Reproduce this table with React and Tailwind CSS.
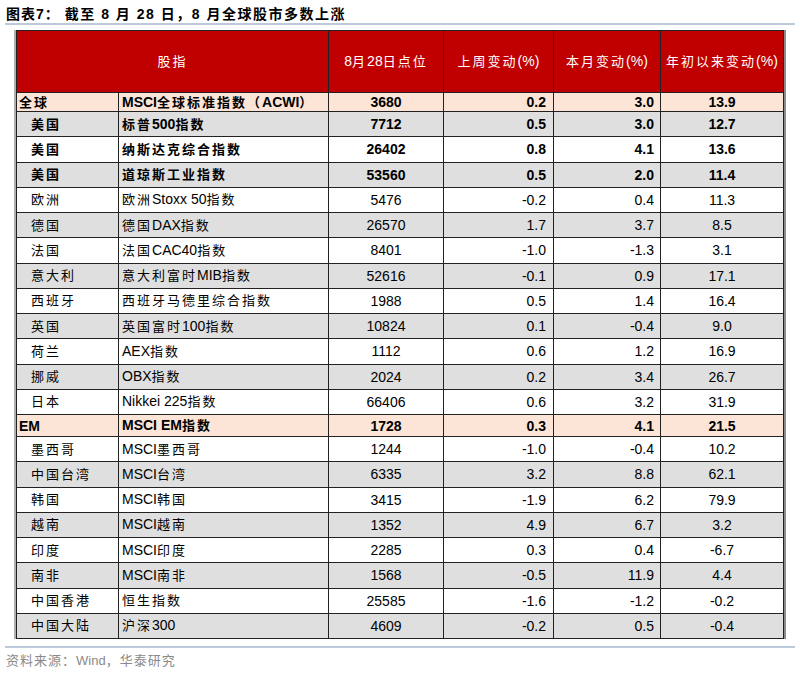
import React from "react";

const rows = [
  ["全球", "MSCI全球标准指数（ACWI）", "3680", "0.2", "3.0", "13.9", "main"],
  ["美国", "标普500指数", "7712", "0.5", "3.0", "12.7", "bold"],
  ["美国", "纳斯达克综合指数", "26402", "0.8", "4.1", "13.6", "bold"],
  ["美国", "道琼斯工业指数", "53560", "0.5", "2.0", "11.4", "bold"],
  ["欧洲", "欧洲Stoxx 50指数", "5476", "-0.2", "0.4", "11.3"],
  ["德国", "德国DAX指数", "26570", "1.7", "3.7", "8.5"],
  ["法国", "法国CAC40指数", "8401", "-1.0", "-1.3", "3.1"],
  ["意大利", "意大利富时MIB指数", "52616", "-0.1", "0.9", "17.1"],
  ["西班牙", "西班牙马德里综合指数", "1988", "0.5", "1.4", "16.4"],
  ["英国", "英国富时100指数", "10824", "0.1", "-0.4", "9.0"],
  ["荷兰", "AEX指数", "1112", "0.6", "1.2", "16.9"],
  ["挪威", "OBX指数", "2024", "0.2", "3.4", "26.7"],
  ["日本", "Nikkei 225指数", "66406", "0.6", "3.2", "31.9"],
  ["EM", "MSCI EM指数", "1728", "0.3", "4.1", "21.5", "main"],
  ["墨西哥", "MSCI墨西哥", "1244", "-1.0", "-0.4", "10.2"],
  ["中国台湾", "MSCI台湾", "6335", "3.2", "8.8", "62.1"],
  ["韩国", "MSCI韩国", "3415", "-1.9", "6.2", "79.9"],
  ["越南", "MSCI越南", "1352", "4.9", "6.7", "3.2"],
  ["印度", "MSCI印度", "2285", "0.3", "0.4", "-6.7"],
  ["南非", "MSCI南非", "1568", "-0.5", "11.9", "4.4"],
  ["中国香港", "恒生指数", "25585", "-1.6", "-1.2", "-0.2"],
  ["中国大陆", "沪深300", "4609", "-0.2", "0.5", "-0.4"],
];

const CJK = /([\u3000-\u303f\u4e00-\u9fff\uff00-\uffef]+)/;

// cjk runs get wider spacing like the pdf font
const Txt = ({ s }) =>
  s.split(CJK).map((part, i) =>
    CJK.test(part) ? (
      <span key={i} className="tracking-[2px] text-[13px]">{part}</span>
    ) : (
      <span key={i}>{part}</span>
    )
  );

export default function App() {
  return (
    <div className="w-[800px] h-[673px] bg-white text-black font-['Liberation_Sans','Noto_Sans_CJK_SC',sans-serif] overflow-hidden">
      <div className="h-[23px] pl-[6px] pt-[5px] text-[14px] font-bold leading-[18px]">
        <span className="tracking-[1px]">图表7：</span>
        <span className="ml-[5px] tracking-[1.5px]">截至 8 月 28 日，8 月全球股市多数上涨</span>
      </div>
      <div className="mx-[5px] h-[2px] bg-[#bccadb]" />

      <table className="ml-[16px] mt-[5px] table-fixed border-collapse text-[14px] shadow-[2px_0_0_#8c8c8c,-2px_0_0_#b0b0b0]">
        <colgroup>
          <col className="w-[102px]" />
          <col className="w-[210px]" />
          <col className="w-[115px]" />
          <col className="w-[110px]" />
          <col className="w-[107px]" />
          <col className="w-[123px]" />
        </colgroup>
        <thead>
          <tr className="h-[62px] bg-[#c00000] text-white">
            <th colSpan={2} className="border border-[#222] font-normal"><Txt s="股指" /></th>
            <th className="border border-[#222] font-normal"><Txt s="8月28日点位" /></th>
            <th className="border border-[#222] font-normal"><Txt s="上周变动(%)" /></th>
            <th className="border border-[#222] font-normal"><Txt s="本月变动(%)" /></th>
            <th className="border border-[#222] font-normal whitespace-nowrap"><Txt s="年初以来变动(%)" /></th>
          </tr>
        </thead>
        <tbody>
          {rows.map((r, i) => {
            const main = r[6] === "main";
            const bold = main || r[6] === "bold";
            let bg = i % 2 === 1 ? "bg-[#dfdfdf]" : "bg-white";
            if (main) bg = "bg-[#fce4d6]";
            let h = "h-[25.25px]";
            if (i === 0) h = "h-[19px]";
            if (i === 13) h = "h-[22px]";
            return (
              <tr key={i} className={`${h} ${bg} ${bold ? "font-bold" : ""} leading-[16px]`}>
                <td className={`border border-[#222] ${main ? "pl-[2px]" : "pl-[14px]"} whitespace-nowrap`}><Txt s={r[0]} /></td>
                <td className="border border-[#222] pl-[3px] whitespace-nowrap"><Txt s={r[1]} /></td>
                <td className="border border-[#222] text-center">{r[2]}</td>
                <td className="border border-[#222] text-right pr-[7px]">{r[3]}</td>
                <td className="border border-[#222] text-right pr-[6px]">{r[4]}</td>
                <td className="border border-[#222] text-center">{r[5]}</td>
              </tr>
            );
          })}
        </tbody>
      </table>

      <div className="mx-[5px] mt-[7px] h-[2px] bg-[#bccadb]" />
      <div className="pl-[6px] pt-[4px] text-[13px] text-[#8a8a8a] leading-[18px]">
        <span className="tracking-[1px]">资料来源：</span>
        <span>Wind</span>
        <span className="tracking-[1px]">，华泰研究</span>
      </div>
    </div>
  );
}
